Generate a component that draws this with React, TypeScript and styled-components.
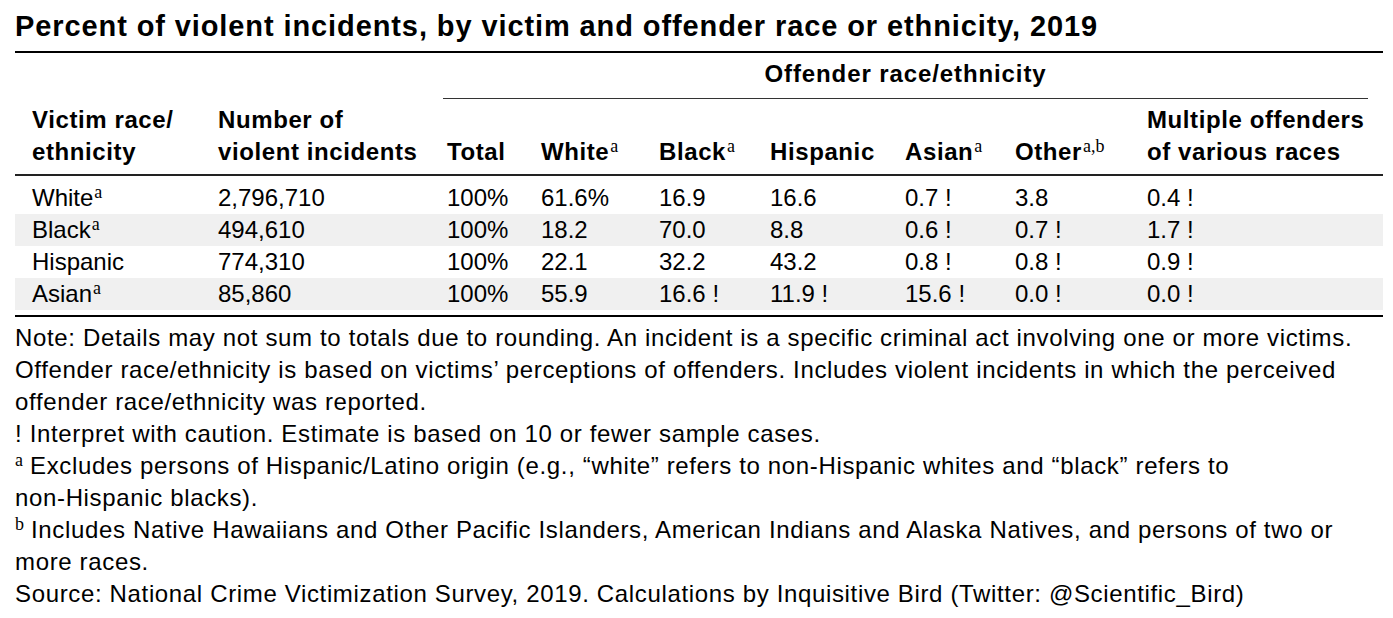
import React from 'react';
import styled, { createGlobalStyle } from 'styled-components';

const GlobalStyle = createGlobalStyle`
    html, body {
        margin: 0;
        padding: 0;
        background: #ffffff;
    }
    body {
        font-family: 'Liberation Sans', Arial, sans-serif;
        color: #000000;
    }
`;

const columns = '186px 229px 94px 118px 111px 135px 110px 132px 1fr';

const Page = styled.div`
    width: 1368px;
    padding: 8px 10px 0 15px;
`;

const Title = styled.h1`
    margin: 0;
    font-size: 29px;
    line-height: 36px;
    font-weight: 700;
    letter-spacing: 0.9px;
    white-space: nowrap;
`;

const Rule = styled.div<{ $gap: number; $thick?: number; $color?: string }>`
    margin-top: ${props => props.$gap}px;
    height: ${props => props.$thick || 2}px;
    background: ${props => props.$color || '#000'};
`;

const GroupHead = styled.div`
    margin: 5px 0 0 428px;
    width: 925px;
    font-size: 24px;
    line-height: 32px;
    font-weight: 700;
    letter-spacing: 0.9px;
    text-align: center;
`;

const GroupRule = styled.div`
    margin: 8px 0 0 428px;
    width: 925px;
    height: 1px;
    background: #333;
`;

const Row = styled.div<{ $shade?: boolean }>`
    display: grid;
    grid-template-columns: ${columns};
    align-items: end;
    padding-left: 17px;
    font-size: 24px;
    line-height: 32px;
    white-space: nowrap;
    background: ${props => (props.$shade ? '#f0f0f0' : 'transparent')};
`;

const HeadRow = styled(Row)`
    margin-top: 5px;
    font-weight: 700;
    letter-spacing: 0.6px;
`;

const Body = styled.div`
    margin-top: 6px;
`;

const Sup = styled.sup`
    font-family: 'Liberation Serif', 'Times New Roman', serif;
    font-weight: 400;
    font-size: 18px;
    letter-spacing: 0;
    line-height: 0;
    vertical-align: 8px;
    margin-left: 1px;
`;

const Notes = styled.div`
    margin-top: 5px;
    font-size: 24px;
    line-height: 32px;
    letter-spacing: 0.65px;
`;

const NoteLine = styled.div`
    white-space: nowrap;
`;

const NoteSup = styled(Sup)`
    margin: 0 7px 0 0;
`;

type Entry = {
    victim: string;
    mark?: boolean;
    count: string;
    values: string[];
};

const rows: Entry[] = [
    { victim: 'White', mark: true, count: '2,796,710', values: ['100%', '61.6%', '16.9', '16.6', '0.7 !', '3.8', '0.4 !'] },
    { victim: 'Black', mark: true, count: '494,610', values: ['100%', '18.2', '70.0', '8.8', '0.6 !', '0.7 !', '1.7 !'] },
    { victim: 'Hispanic', count: '774,310', values: ['100%', '22.1', '32.2', '43.2', '0.8 !', '0.8 !', '0.9 !'] },
    { victim: 'Asian', mark: true, count: '85,860', values: ['100%', '55.9', '16.6 !', '11.9 !', '15.6 !', '0.0 !', '0.0 !'] },
];

const App = () => {
    return (
        <Page>
            <GlobalStyle />
            <Title>Percent of violent incidents, by victim and offender race or ethnicity, 2019</Title>
            <Rule $gap={7} />
            <GroupHead>Offender race/ethnicity</GroupHead>
            <GroupRule />
            <HeadRow>
                <div>
                    Victim race/
                    <br />
                    ethnicity
                </div>
                <div>
                    Number of
                    <br />
                    violent incidents
                </div>
                <div>Total</div>
                <div>
                    White<Sup>a</Sup>
                </div>
                <div>
                    Black<Sup>a</Sup>
                </div>
                <div>Hispanic</div>
                <div>
                    Asian<Sup>a</Sup>
                </div>
                <div>
                    Other<Sup>a,b</Sup>
                </div>
                <div>
                    Multiple offenders
                    <br />
                    of various races
                </div>
            </HeadRow>
            <Rule $gap={6} $thick={2} $color="#222" />
            <Body>
                {rows.map((row, i) => (
                    <Row key={row.victim} $shade={i % 2 === 1}>
                        <div>
                            {row.victim}
                            {row.mark && <Sup>a</Sup>}
                        </div>
                        <div>{row.count}</div>
                        {row.values.map((v, j) => (
                            <div key={j}>{v}</div>
                        ))}
                    </Row>
                ))}
            </Body>
            <Rule $gap={5} />
            <Notes>
                <NoteLine>
                    Note: Details may not sum to totals due to rounding. An incident is a specific criminal act involving one or more victims.
                </NoteLine>
                <NoteLine>
                    Offender race/ethnicity is based on victims’ perceptions of offenders. Includes violent incidents in which the perceived
                </NoteLine>
                <NoteLine>offender race/ethnicity was reported.</NoteLine>
                <NoteLine>! Interpret with caution. Estimate is based on 10 or fewer sample cases.</NoteLine>
                <NoteLine>
                    <NoteSup>a</NoteSup>Excludes persons of Hispanic/Latino origin (e.g., “white” refers to non-Hispanic whites and “black” refers to
                </NoteLine>
                <NoteLine>non-Hispanic blacks).</NoteLine>
                <NoteLine>
                    <NoteSup>b</NoteSup>Includes Native Hawaiians and Other Pacific Islanders, American Indians and Alaska Natives, and persons of two or
                </NoteLine>
                <NoteLine>more races.</NoteLine>
                <NoteLine>Source: National Crime Victimization Survey, 2019. Calculations by Inquisitive Bird (Twitter: @Scientific_Bird)</NoteLine>
            </Notes>
        </Page>
    );
};

export default App;
